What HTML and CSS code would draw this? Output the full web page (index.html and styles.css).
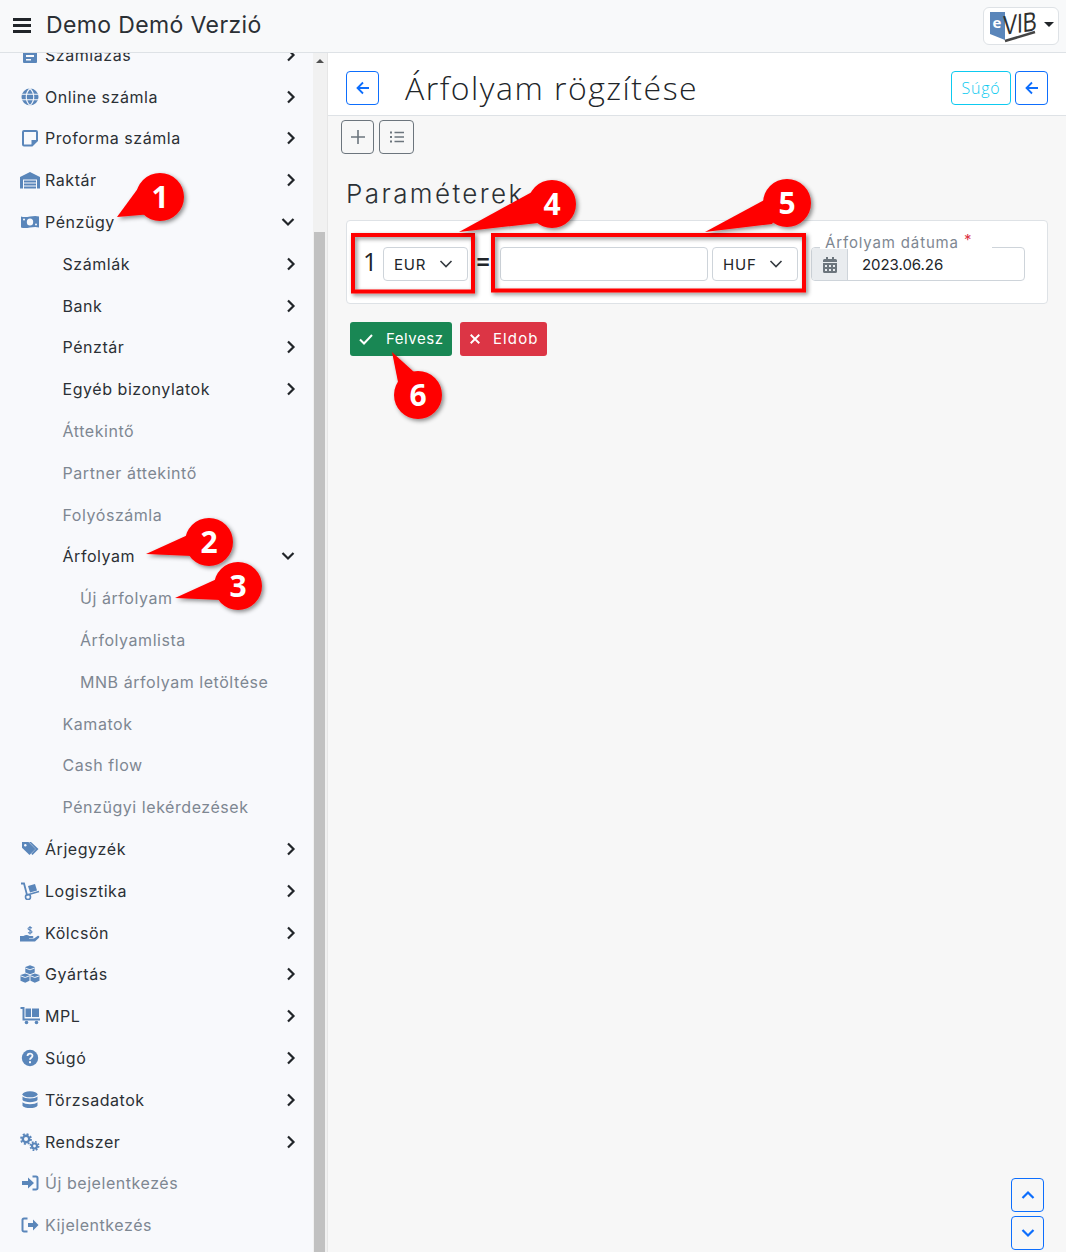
FILE: index.html
```html
<!DOCTYPE html>
<html lang="hu">
<head>
<meta charset="utf-8">
<title>Demo Demó Verzió</title>
<link rel="stylesheet" href="styles.css">
</head>
<body>
<svg class="defs" width="0" height="0" aria-hidden="true">
  <symbol id="chev-r" viewBox="0 0 12 14"><path d="M3 1.500 8.500 7 3 12.500" fill="none" stroke="currentColor" stroke-width="2.200"/></symbol>
  <symbol id="chev-d" viewBox="0 0 14 12"><path d="M1.500 3 7 8.500 12.500 3" fill="none" stroke="currentColor" stroke-width="2.200"/></symbol>
  <symbol id="chev-thin" viewBox="0 0 14 12"><path d="M1.500 3 7 8.500 12.500 3" fill="none" stroke="currentColor" stroke-width="1.600"/></symbol>
  <symbol id="i-invoice" viewBox="0 0 18 18"><path d="M3 1h12a1 1 0 0 1 1 1v14a1 1 0 0 1-1 1H3a1 1 0 0 1-1-1V2a1 1 0 0 1 1-1z"/><path d="M5 9h8v2H5zM5 13h5v1.500H5z" fill="#f8f9fc"/></symbol>
  <symbol id="i-globe" viewBox="0 0 18 18"><circle cx="9" cy="9" r="8.500"/><path d="M.5 6.200h17M.5 11.800h17M9 .5c-5 4.500-5 12.500 0 17M9 .5c5 4.500 5 12.500 0 17" fill="none" stroke="#f8f9fc" stroke-width="1.100"/></symbol>
  <symbol id="i-note" viewBox="0 0 18 18"><path d="M3 2h12a1 1 0 0 1 1 1v8.500L11 16.500H3a1 1 0 0 1-1-1V3a1 1 0 0 1 1-1z" fill="none" stroke="currentColor" stroke-width="2"/><path d="M10.500 11h5.500l-5.500 5.500z"/></symbol>
  <symbol id="i-wh" viewBox="0 0 20 18"><path d="M0 17.500V6L10 1l10 5v11.500h-3V8.500H3v9z"/><path d="M4 9.500h12v2H4zM4 12.500h12v2H4zM4 15.500h12v2H4z"/></symbol>
  <symbol id="i-money" viewBox="0 0 20 18"><path d="M1 3.500c6 2 12-2 18 0v11c-6-2-12 2-18 0z"/><ellipse cx="10" cy="9" rx="3.200" ry="3.600" fill="#f8f9fc"/><circle cx="4" cy="6.500" r="1" fill="#f8f9fc"/><circle cx="16" cy="11.500" r="1" fill="#f8f9fc"/></symbol>
  <symbol id="i-tags" viewBox="0 0 18 18"><path d="M1 2h6.500L14.500 9l-6 6L1 7.800z"/><circle cx="4.300" cy="5.300" r="1.200" fill="#f8f9fc"/><path d="M10 2l7.500 7-6 6-1.300-1.200 4.500-4.800L8 2z"/></symbol>
  <symbol id="i-dolly" viewBox="0 0 20 18"><path d="M1 1.500h3L7 13l12-3.500" fill="none" stroke="currentColor" stroke-width="1.800"/><path d="M8 4l7-2 2 6.500-7 2z"/><circle cx="8" cy="15" r="2.500" fill="none" stroke="currentColor" stroke-width="1.600"/></symbol>
  <symbol id="i-hand" viewBox="0 0 20 18"><path d="M0 12h3.500c2-1.500 4-1.500 6 0h3c1.200 0 1.200 2 0 2H9v.6h5l3.500-2.600c1.300-.8 2.500.8 1.500 1.800L15 17.500H0z"/><path d="M8 8.500c2 1 4 .6 4-.8S8 6.300 8 4.800 10 3 12 4M10 2v8.500" fill="none" stroke="currentColor" stroke-width="1.100"/></symbol>
  <symbol id="i-cubes" viewBox="0 0 20 18"><path d="M10 .3l4.700 1.800v5.400L10 9.300 5.300 7.500V2.100zM5.200 8.400l4.300 1.700v5.700l-4.300 1.900L.5 15.800v-5.700zM14.800 8.400l4.700 1.700v5.700l-4.700 1.900-4.300-1.900v-5.700z"/><path d="M5.300 3 10 4.800 14.700 3M.5 10.800l4.700 1.700 4.300-1.700M10.500 10.800l4.300 1.700 4.700-1.700" fill="none" stroke="#f8f9fc" stroke-width=".9"/></symbol>
  <symbol id="i-flat" viewBox="0 0 20 18"><path d="M.5 1h3v11.500H20" fill="none" stroke="currentColor" stroke-width="2"/><path d="M5.500 1.500H11V10H5.500zM12 1.500h7V10h-7z"/><circle cx="6.500" cy="15.500" r="1.800"/><circle cx="16.500" cy="15.500" r="1.800"/></symbol>
  <symbol id="i-help" viewBox="0 0 18 18"><circle cx="9" cy="9" r="8.200"/><path d="M6.500 7c0-3.200 5-3.200 5-.2 0 2-2.500 1.800-2.500 4" fill="none" stroke="#f8f9fc" stroke-width="1.800"/><rect x="8" y="12.200" width="2" height="2" fill="#f8f9fc"/></symbol>
  <symbol id="i-db" viewBox="0 0 18 18"><ellipse cx="9" cy="3.300" rx="7.500" ry="3"/><path d="M1.500 5.500c2 2.600 13 2.600 15 0v3.600c-2 2.800-13 2.800-15 0zM1.500 11.200c2 2.600 13 2.600 15 0v3.500c-1.500 3.200-13.500 3.200-15 0z"/></symbol>
  <symbol id="i-cogs" viewBox="0 0 20 18"><circle cx="6" cy="6" r="3.200" fill="none" stroke="currentColor" stroke-width="2.400"/><circle cx="6" cy="6" r="5" fill="none" stroke="currentColor" stroke-width="1.800" stroke-dasharray="2 1.930"/><circle cx="14.500" cy="13" r="2.500" fill="none" stroke="currentColor" stroke-width="2.200"/><circle cx="14.500" cy="13" r="4.200" fill="none" stroke="currentColor" stroke-width="1.600" stroke-dasharray="1.800 1.500"/></symbol>
  <symbol id="i-in" viewBox="0 0 18 18"><path d="M1 7h6V3.500L13 9l-6 5.500V11H1z"/><path d="M11.500 2.500H15a1.500 1.500 0 0 1 1.500 1.500v10a1.500 1.500 0 0 1-1.500 1.500h-3.500" fill="none" stroke="currentColor" stroke-width="2"/></symbol>
  <symbol id="i-out" viewBox="0 0 18 18"><path d="M7 7h5V3.500L17.500 9 12 14.500V11H7z"/><path d="M6.500 2.500H3A1.500 1.500 0 0 0 1.500 4v10A1.500 1.500 0 0 0 3 15.500h3.500" fill="none" stroke="currentColor" stroke-width="2"/></symbol>
  <symbol id="arrow-l" viewBox="0 0 16 16"><path d="M14 8H2.500M8 2.500 2.500 8 8 13.500" fill="none" stroke="currentColor" stroke-width="1.800"/></symbol>
</svg>

<div class="app">
  <header class="topbar">
    <svg class="burger" viewBox="0 0 18 15"><path d="M0 1.500h18M0 7.500h18M0 13.500h18" stroke="currentColor" stroke-width="3"/></svg>
    <span class="brand">Demo Demó Verzió</span>
    <button class="logo-btn" type="button">
      <svg class="logo" viewBox="0 0 50 34">
        <path class="logo-blue" d="M1 3h15v25l0 3L1 25z"/>
        <text class="logo-e" x="3.500" y="19">e</text>
        <path class="logo-stroke" d="M16 32 L46 23"/>
        <text class="logo-vib" transform="translate(14 26) skewY(-8) scale(1 1.300)">VIB</text>
      </svg>
      <span class="caret"></span>
    </button>
  </header>

  <div class="body-row">
    <aside class="sidebar">
      <nav class="menu">
        <a class="row"><svg class="ico"><use href="#i-invoice"/></svg><span class="lbl">Számlázás</span><svg class="chev"><use href="#chev-r"/></svg></a>
        <a class="row"><svg class="ico"><use href="#i-globe"/></svg><span class="lbl">Online számla</span><svg class="chev"><use href="#chev-r"/></svg></a>
        <a class="row"><svg class="ico"><use href="#i-note"/></svg><span class="lbl">Proforma számla</span><svg class="chev"><use href="#chev-r"/></svg></a>
        <a class="row"><svg class="ico wide"><use href="#i-wh"/></svg><span class="lbl">Raktár</span><svg class="chev"><use href="#chev-r"/></svg></a>
        <a class="row"><svg class="ico wide"><use href="#i-money"/></svg><span class="lbl">Pénzügy</span><svg class="chev-open"><use href="#chev-d"/></svg></a>
        <a class="row sub"><span class="lbl">Számlák</span><svg class="chev"><use href="#chev-r"/></svg></a>
        <a class="row sub"><span class="lbl">Bank</span><svg class="chev"><use href="#chev-r"/></svg></a>
        <a class="row sub"><span class="lbl">Pénztár</span><svg class="chev"><use href="#chev-r"/></svg></a>
        <a class="row sub"><span class="lbl">Egyéb bizonylatok</span><svg class="chev"><use href="#chev-r"/></svg></a>
        <a class="row sub muted"><span class="lbl">Áttekintő</span></a>
        <a class="row sub muted"><span class="lbl">Partner áttekintő</span></a>
        <a class="row sub muted"><span class="lbl">Folyószámla</span></a>
        <a class="row sub"><span class="lbl">Árfolyam</span><svg class="chev-open"><use href="#chev-d"/></svg></a>
        <a class="row subsub muted"><span class="lbl">Új árfolyam</span></a>
        <a class="row subsub muted"><span class="lbl">Árfolyamlista</span></a>
        <a class="row subsub muted"><span class="lbl">MNB árfolyam letöltése</span></a>
        <a class="row sub muted"><span class="lbl">Kamatok</span></a>
        <a class="row sub muted"><span class="lbl">Cash flow</span></a>
        <a class="row sub muted"><span class="lbl">Pénzügyi lekérdezések</span></a>
        <a class="row"><svg class="ico"><use href="#i-tags"/></svg><span class="lbl">Árjegyzék</span><svg class="chev"><use href="#chev-r"/></svg></a>
        <a class="row"><svg class="ico wide"><use href="#i-dolly"/></svg><span class="lbl">Logisztika</span><svg class="chev"><use href="#chev-r"/></svg></a>
        <a class="row"><svg class="ico wide"><use href="#i-hand"/></svg><span class="lbl">Kölcsön</span><svg class="chev"><use href="#chev-r"/></svg></a>
        <a class="row"><svg class="ico wide"><use href="#i-cubes"/></svg><span class="lbl">Gyártás</span><svg class="chev"><use href="#chev-r"/></svg></a>
        <a class="row"><svg class="ico wide"><use href="#i-flat"/></svg><span class="lbl">MPL</span><svg class="chev"><use href="#chev-r"/></svg></a>
        <a class="row"><svg class="ico"><use href="#i-help"/></svg><span class="lbl">Súgó</span><svg class="chev"><use href="#chev-r"/></svg></a>
        <a class="row"><svg class="ico"><use href="#i-db"/></svg><span class="lbl">Törzsadatok</span><svg class="chev"><use href="#chev-r"/></svg></a>
        <a class="row"><svg class="ico wide"><use href="#i-cogs"/></svg><span class="lbl">Rendszer</span><svg class="chev"><use href="#chev-r"/></svg></a>
        <a class="row muted"><svg class="ico"><use href="#i-in"/></svg><span class="lbl">Új bejelentkezés</span></a>
        <a class="row muted"><svg class="ico"><use href="#i-out"/></svg><span class="lbl">Kijelentkezés</span></a>
      </nav>
      <div class="scrollbar"><span class="sb-up"></span><span class="sb-thumb"></span></div>
    </aside>

    <main class="main">
      <div class="titlebar">
        <button class="btn btn-blue icon-btn" type="button"><svg class="arrow"><use href="#arrow-l"/></svg></button>
        <h1 class="title">Árfolyam rögzítése</h1>
        <button class="btn btn-cyan" type="button">Súgó</button>
        <button class="btn btn-blue icon-btn" type="button"><svg class="arrow"><use href="#arrow-l"/></svg></button>
      </div>
      <div class="toolbar">
        <button class="btn btn-gray plus-btn" type="button"><svg class="tool" viewBox="0 0 14 14"><path d="M7 0v14M0 7h14" stroke="currentColor" stroke-width="1.600"/></svg></button>
        <button class="btn btn-gray list-btn" type="button"><svg class="tool" viewBox="0 0 14 14"><path d="M4.500 2.500H14M4.500 7H14M4.500 11.500H14" stroke="currentColor" stroke-width="1.500"/><path d="M0 1.500h2v2H0zM0 6h2v2H0zM0 10.500h2v2H0z" fill="currentColor"/></svg></button>
      </div>
      <h2 class="section">Paraméterek</h2>
      <section class="card">
        <span class="one">1</span>
        <div class="select sel-eur"><span>EUR</span><svg class="sel-chev"><use href="#chev-thin"/></svg></div>
        <span class="eq">=</span>
        <div class="input"></div>
        <div class="select sel-huf"><span>HUF</span><svg class="sel-chev"><use href="#chev-thin"/></svg></div>
        <div class="date">
          <span class="float-label">Árfolyam dátuma <b class="req">*</b></span>
          <span class="addon"><svg class="cal" viewBox="0 0 14 16"><path d="M0 6h14v8.500a1.500 1.500 0 0 1-1.500 1.500h-11A1.500 1.500 0 0 1 0 14.500zM1.500 2H3V0h2v2h4V0h2v2h1.500A1.500 1.500 0 0 1 14 3.500V5H0V3.500A1.500 1.500 0 0 1 1.500 2z" fill="currentColor"/><path d="M2 8h2v2H2zM6 8h2v2H6zM10 8h2v2h-2zM2 12h2v2H2zM6 12h2v2H6zM10 12h2v2h-2z" fill="#e9ecef"/></svg></span>
          <span class="date-val">2023.06.26</span>
        </div>
      </section>
      <div class="actions">
        <button class="btn-solid green" type="button"><svg class="act" viewBox="0 0 14 14"><path d="M1 7.500 5 11.500 13 3" fill="none" stroke="currentColor" stroke-width="2"/></svg>Felvesz</button>
        <button class="btn-solid red" type="button"><svg class="act act-x" viewBox="0 0 14 14"><path d="M2 2l10 10M12 2 2 12" stroke="currentColor" stroke-width="2.200"/></svg>Eldob</button>
      </div>
      <div class="scroll-btns">
        <button class="btn btn-blue sq" type="button"><svg class="sq-ico flip"><use href="#chev-d"/></svg></button>
        <button class="btn btn-blue sq" type="button"><svg class="sq-ico"><use href="#chev-d"/></svg></button>
      </div>
    </main>
  </div>

  <svg class="notes" viewBox="0 0 1066 1252">
    <defs>
      <filter id="sh" x="-20%" y="-20%" width="150%" height="150%"><feDropShadow dx="2" dy="2" stdDeviation="2" flood-color="#000" flood-opacity=".45"/></filter>
    </defs>
    <g class="note-boxes" filter="url(#sh)">
      <rect x="353" y="235" width="120" height="56.500"/>
      <rect x="493" y="235" width="311" height="55.500"/>
    </g>
    <g class="bubbles" filter="url(#sh)">
      <path d="M117 217 139 187 160 197 152 214z"/><circle cx="160" cy="197" r="24"/>
      <path d="M146 554 190 534 209 542 192 556z"/><circle cx="209" cy="542" r="24"/>
      <path d="M175 598 219 578 238 586 221 600z"/><circle cx="238" cy="586" r="24"/>
      <path d="M459 232 532 192 552 204 538 223z"/><circle cx="552" cy="204" r="24"/>
      <path d="M705 232 768 198 787 203 772 224z"/><circle cx="787" cy="203" r="24"/>
      <path d="M392 352 414 372 418 395 398 382z"/><circle cx="418" cy="395" r="24"/>
    </g>
    <g class="nums">
      <text x="160" y="208">1</text>
      <text x="209" y="553">2</text>
      <text x="238" y="597">3</text>
      <text x="552" y="215">4</text>
      <text x="787" y="214">5</text>
      <text x="418" y="406">6</text>
    </g>
  </svg>
</div>
</body>
</html>
```

FILE: styles.css
```css
* { box-sizing: border-box; }
html, body { margin: 0; height: 100%; }
body { font-family: Inter, "Noto Sans", sans-serif; font-size: 16px; color: #212529; background: #f7f7f7; overflow: hidden; }
.defs { position: absolute; }
.app { position: relative; width: 1066px; height: 1252px; display: flex; flex-direction: column; overflow: hidden; }

.topbar { height: 53px; flex: none; display: flex; align-items: center; background: #f8f9fa; border-bottom: 1px solid #dee2e6; padding: 0 7px 2px 13px; }
.burger { width: 18px; height: 15px; color: #212529; flex: none; }
.brand { margin-left: 15px; font-size: 23px; font-weight: 400; letter-spacing: .37px; color: #2b3035; flex: 1; }
.logo-btn { width: 76px; height: 38px; padding: 0 0 0 5px; margin-top: 2px; display: flex; align-items: center; gap: 5px; background: #fff; border: 1px solid #dee2e6; border-radius: 6px; }
.logo { width: 50px; height: 34px; flex: none; }
.logo-blue { fill: #5a86ba; }
.logo-e { font: 700 15px "Open Sans", sans-serif; fill: #fff; }
.logo-vib { font: 400 21px "Liberation Sans", sans-serif; fill: #2f2f2f; }
.logo-stroke { stroke: #444; stroke-width: 2.500; fill: none; }
.caret { width: 0; height: 0; border-left: 5px solid transparent; border-right: 5px solid transparent; border-top: 5px solid #212529; margin-top: -3px; }

.body-row { flex: 1; display: flex; min-height: 0; }
.sidebar { width: 328px; flex: none; display: flex; background: #f8f9fc; overflow: hidden; }
.menu { width: 313px; flex: none; margin-top: -19px; }
.row { height: 41.8px; display: flex; align-items: center; padding-left: 21px; font-size: 16px; letter-spacing: .55px; color: #2b3035; position: relative; }
.row.sub { padding-left: 62.5px; }
.row.subsub { padding-left: 80px; }
.row.muted { color: #7e8792; }
.ico { width: 18px; height: 18px; flex: none; fill: #5a86ba; color: #5a86ba; margin-right: 6px; }
.ico.wide { width: 20px; margin-left: -1px; margin-right: 5px; }
.lbl { flex: 1; white-space: nowrap; }
.chev { width: 12px; height: 14px; color: #212529; flex: none; margin-right: 16px; }
.chev-open { width: 14px; height: 12px; color: #212529; flex: none; margin-right: 18px; }
.scrollbar { width: 15px; flex: none; background: #f1f1f1; border-right: 1px solid #e6e6e6; padding-left: 1px; display: flex; flex-direction: column; }
.sb-up { width: 0; height: 0; margin: 6px 0 0 2px; border-left: 4px solid transparent; border-right: 4px solid transparent; border-bottom: 4px solid #505050; }
.sb-thumb { width: 11px; flex: 1; margin-top: 169px; background: #c1c1c1; }

.main { flex: 1; position: relative; min-width: 0; }
.titlebar { height: 63px; background: #fff; border-bottom: 1px solid #dee2e6; display: flex; align-items: center; gap: 4px; padding: 8px 18px 0; }
.title { flex: 1; margin: 0 0 0 22px; font-family: "Open Sans", sans-serif; font-weight: 300; font-size: 32px; letter-spacing: 1.5px; line-height: 40px; color: #212529; }
.btn { height: 34px; background: transparent; border: 1px solid; border-radius: 4px; padding: 0; display: inline-flex; align-items: center; justify-content: center; }
.btn-blue { color: #0d6efd; border-color: #0d6efd; }
.btn-cyan { color: #0dcaf0; border-color: #0dcaf0; width: 60px; font: 300 16px "Open Sans", sans-serif; letter-spacing: .8px; }
.btn-gray { color: #6c757d; border-color: #6c757d; }
.icon-btn { width: 33px; }
.arrow { width: 16px; height: 16px; }
.toolbar { display: flex; gap: 5px; padding: 4px 0 0 13px; }
.plus-btn { width: 33px; }
.list-btn { width: 35px; }
.tool { width: 14px; height: 14px; }
.section { margin: 24px 0 0 18px; height: 42px; font-size: 26px; line-height: 32px; font-weight: 300; letter-spacing: 2.4px; color: #2b3035; }
.card { margin: 0 18px 0 18px; height: 84px; background: #fff; border: 1px solid #dee2e6; border-radius: 4px; display: flex; align-items: center; padding: 4px 0 0 16px; }
.one { width: 20px; font-family: "Open Sans", sans-serif; font-weight: 400; font-size: 25px; line-height: 30px; margin-top: -7px; }
.select, .input, .date { height: 34px; background: #fff; border: 1px solid #ced4da; border-radius: 4px; }
.select { display: flex; align-items: center; font-size: 15px; letter-spacing: .8px; padding: 0 14px 0 10px; }
.select span { flex: 1; }
.sel-chev { width: 14px; height: 12px; color: #343a40; }
.sel-eur { width: 85px; }
.sel-huf { width: 86px; margin-left: 4px; }
.eq { width: 32px; padding-left: 7px; font-size: 24px; font-weight: 600; margin-top: -7px; }
.input { width: 208px; }
.date { width: 214px; margin-left: 13px; display: flex; align-items: center; position: relative; }
.addon { width: 36px; height: 32px; background: #e9ecef; border-right: 1px solid #ced4da; border-radius: 3px 0 0 3px; display: flex; align-items: center; justify-content: center; }
.cal { width: 14px; height: 16px; color: #6c757d; margin-top: 2px; }
.date-val { margin-left: 14px; font-size: 15px; letter-spacing: -.05px; color: #212529; }
.float-label { position: absolute; left: 8px; top: -16px; padding: 2px 20px 0 5px; height: 17px; line-height: 17px; background: #fff; font-size: 15px; letter-spacing: .85px; color: #7e8792; white-space: nowrap; }
.req { color: #dc3545; font-weight: 400; position: relative; top: -3px; }
.actions { display: flex; gap: 8px; padding: 18px 0 0 22px; }
.btn-solid { height: 34px; border: 0; border-radius: 3px; color: #fff; display: inline-flex; align-items: center; font: 400 15px Inter, sans-serif; letter-spacing: .55px; padding-bottom: 2px; }
.green { width: 102px; background: #198754; padding-left: 9px; }
.red { width: 87px; background: #dc3545; padding-left: 9px; letter-spacing: 1.1px; }
.act { width: 14px; height: 14px; margin-right: 13px; }
.act-x { width: 12px; height: 12px; margin-right: 12px; }
.scroll-btns { position: absolute; right: 22px; bottom: 2px; display: flex; flex-direction: column; gap: 4px; }
.sq { width: 33px; }
.sq-ico { width: 14px; height: 12px; }
.flip { transform: rotate(180deg); }

.notes { position: absolute; left: 0; top: 0; width: 1066px; height: 1252px; pointer-events: none; }
.note-boxes rect { fill: none; stroke: #f00; stroke-width: 4; }
.bubbles path, .bubbles circle { fill: #f00; }
.nums text { font: 700 30px "Open Sans", sans-serif; fill: #fff; text-anchor: middle; }
```
